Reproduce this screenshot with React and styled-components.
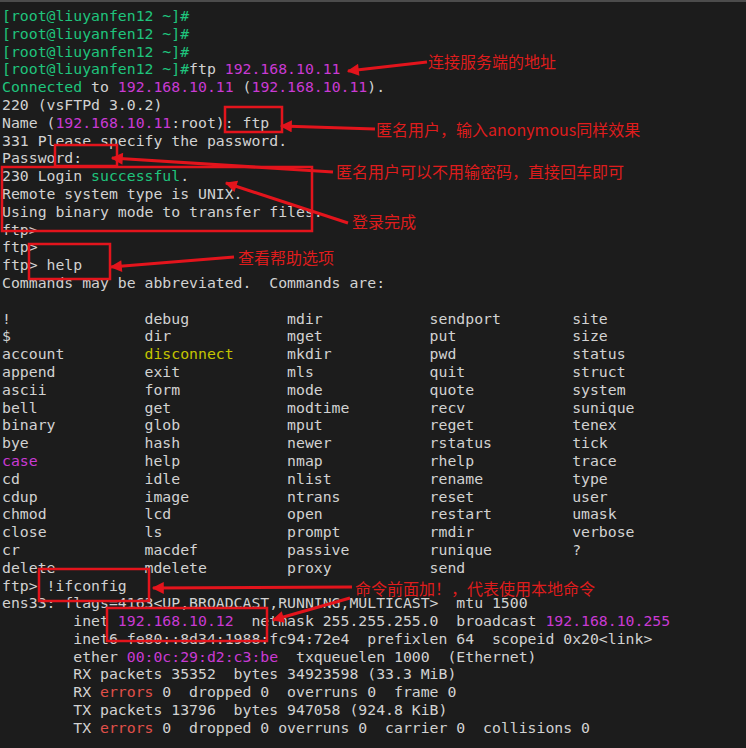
import React from "react";
import styled, { createGlobalStyle } from "styled-components";

const Global = createGlobalStyle`
  html, body {
    margin: 0;
    padding: 0;
    background: #1c1c1c;
  }
`;

const tones = {
  text: "#d2d2d2",
  green: "#1fc47c",
  magenta: "#c93ad3",
  yellow: "#c4c400",
  red: "#e0504a",
};

const Screen = styled.div`
  position: relative;
  width: 746px;
  height: 748px;
  overflow: hidden;
  background: #1c1c1c;
  border-top: 2px solid #4c4c4c;
  box-sizing: border-box;
`;

const Terminal = styled.div`
  padding: 5px 0 0 2px;
  font-family: "DejaVu Sans Mono", "Liberation Mono", monospace;
  font-size: 14.8px;
  line-height: 17.8px;
  color: ${tones.text};
`;

const Line = styled.div`
  white-space: pre;
  height: 17.8px;
`;

const C = styled.span`
  color: ${(p) => tones[p.$tone] || tones.text};
`;

const HelpGrid = styled.div`
  display: grid;
  grid-template-columns: repeat(5, 16ch);
  grid-auto-rows: 17.8px;
`;

const Cmd = styled.span`
  white-space: pre;
  color: ${(p) => tones[p.$tone] || tones.text};
`;

const Overlay = styled.svg`
  position: absolute;
  left: 0;
  top: -2px;
  width: 746px;
  height: 748px;
  pointer-events: none;
`;

const Note = styled.div`
  position: absolute;
  left: ${(p) => p.$x}px;
  top: ${(p) => p.$y - 11}px;
  height: 22px;
  line-height: 22px;
  white-space: nowrap;
  font-family: "Noto Sans CJK SC", "Noto Sans", sans-serif;
  font-size: 16px;
  color: #de1c1c;
`;

const Prompt = ({ children }) => (
  <Line>
    <C $tone="green">[root@liuyanfen12 ~]#</C>
    {children}
  </Line>
);

const commands = [
  ["!", "debug", "mdir", "sendport", "site"],
  ["$", "dir", "mget", "put", "size"],
  ["account", "disconnect", "mkdir", "pwd", "status"],
  ["append", "exit", "mls", "quit", "struct"],
  ["ascii", "form", "mode", "quote", "system"],
  ["bell", "get", "modtime", "recv", "sunique"],
  ["binary", "glob", "mput", "reget", "tenex"],
  ["bye", "hash", "newer", "rstatus", "tick"],
  ["case", "help", "nmap", "rhelp", "trace"],
  ["cd", "idle", "nlist", "rename", "type"],
  ["cdup", "image", "ntrans", "reset", "user"],
  ["chmod", "lcd", "open", "restart", "umask"],
  ["close", "ls", "prompt", "rmdir", "verbose"],
  ["cr", "macdef", "passive", "runique", "?"],
  ["delete", "mdelete", "proxy", "send", ""],
];

const cmdTone = { disconnect: "yellow", case: "magenta" };

const boxes = [
  [225, 107, 57, 25],
  [55, 145, 62, 21],
  [2, 167, 310, 64],
  [29, 244, 81, 35],
  [39, 569, 110, 32],
  [107, 608, 160, 33],
];

const arrows = [
  [427, 62, 348, 71],
  [375, 129, 281, 126],
  [333, 172, 112, 158],
  [348, 223, 226, 183],
  [234, 257, 111, 267],
  [352, 587, 153, 588],
  [350, 598, 273, 620],
];

const notes = [
  [428, 61, "连接服务端的地址"],
  [376, 129, "匿名用户，输入anonymous同样效果"],
  [336, 171, "匿名用户可以不用输密码，直接回车即可"],
  [352, 221, "登录完成"],
  [238, 257, "查看帮助选项"],
  [355, 588, "命令前面加！，代表使用本地命令"],
];

function Annotations() {
  return (
    <>
      <Overlay viewBox="0 0 746 748">
        <defs>
          <marker id="head" viewBox="0 0 10 10" refX="9" refY="5" markerWidth="5" markerHeight="4" orient="auto" markerUnits="strokeWidth">
            <path d="M0,0 L10,5 L0,10 Z" fill="#e3141c" />
          </marker>
        </defs>
        {boxes.map(([x, y, w, h], i) => (
          <rect key={i} x={x} y={y} width={w} height={h} fill="none" stroke="#e3141c" strokeWidth="2.5" />
        ))}
        {arrows.map(([x1, y1, x2, y2], i) => (
          <line key={i} x1={x1} y1={y1} x2={x2} y2={y2} stroke="#e3141c" strokeWidth="3" markerEnd="url(#head)" />
        ))}
      </Overlay>
      {notes.map(([x, y, t]) => (
        <Note key={t} $x={x} $y={y - 2}>{t}</Note>
      ))}
    </>
  );
}

export default function App() {
  return (
    <Screen>
      <Global />
      <Terminal>
        <Prompt />
        <Prompt />
        <Prompt />
        <Prompt>
          ftp <C $tone="magenta">192.168.10.11</C>
        </Prompt>
        <Line>
          <C $tone="green">Connected</C> to <C $tone="magenta">192.168.10.11</C> (<C $tone="magenta">192.168.10.11</C>).
        </Line>
        <Line>220 (vsFTPd 3.0.2)</Line>
        <Line>
          Name (<C $tone="magenta">192.168.10.11</C>:root): ftp
        </Line>
        <Line>331 Please specify the password.</Line>
        <Line>Password:</Line>
        <Line>
          230 Login <C $tone="green">successful</C>.
        </Line>
        <Line>Remote system type is UNIX.</Line>
        <Line>Using binary mode to transfer files.</Line>
        <Line>ftp&gt;</Line>
        <Line>ftp&gt;</Line>
        <Line>ftp&gt; help</Line>
        <Line>Commands may be abbreviated.  Commands are:</Line>
        <Line />
        <HelpGrid>
          {commands.flat().map((c, i) => (
            <Cmd key={i} $tone={cmdTone[c]}>{c}</Cmd>
          ))}
        </HelpGrid>
        <Line>ftp&gt; !ifconfig</Line>
        <Line>{"ens33: flags=4163<UP,BROADCAST,RUNNING,MULTICAST>  mtu 1500"}</Line>
        <Line>
          {"        inet "}<C $tone="magenta">192.168.10.12</C>{"  netmask 255.255.255.0  broadcast "}
          <C $tone="magenta">192.168.10.255</C>
        </Line>
        <Line>{"        inet6 fe80::8d34:1988:fc94:72e4  prefixlen 64  scopeid 0x20<link>"}</Line>
        <Line>
          {"        ether "}<C $tone="magenta">00:0c:29:d2:c3:be</C>{"  txqueuelen 1000  (Ethernet)"}
        </Line>
        <Line>{"        RX packets 35352  bytes 34923598 (33.3 MiB)"}</Line>
        <Line>
          {"        RX "}<C $tone="red">errors</C>{" 0  dropped 0  overruns 0  frame 0"}
        </Line>
        <Line>{"        TX packets 13796  bytes 947058 (924.8 KiB)"}</Line>
        <Line>
          {"        TX "}<C $tone="red">errors</C>{" 0  dropped 0 overruns 0  carrier 0  collisions 0"}
        </Line>
      </Terminal>
      <Annotations />
    </Screen>
  );
}
